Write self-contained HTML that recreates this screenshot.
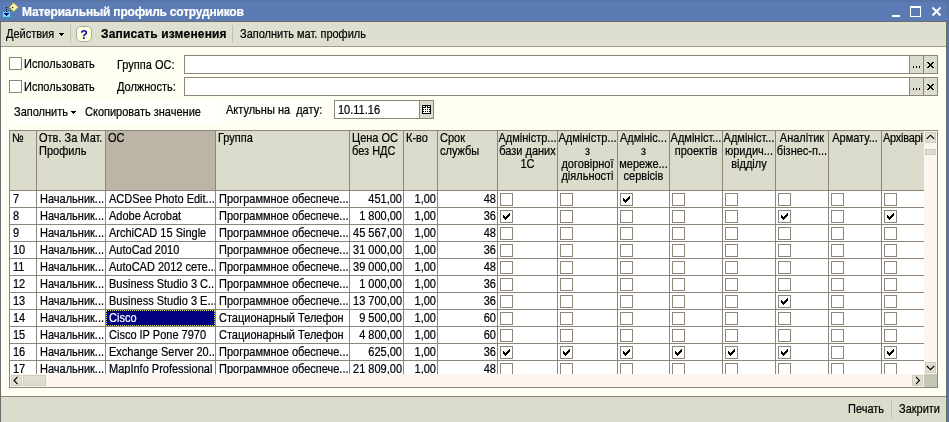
<!DOCTYPE html><html><head><meta charset="utf-8"><style>
*{box-sizing:border-box}
body{margin:0;width:949px;height:422px;overflow:hidden;position:relative;will-change:transform;background:#fffef3;font-family:"Liberation Sans",sans-serif;font-size:11px;color:#000}
.a{position:absolute;white-space:nowrap;line-height:13px;transform:scaleY(1.1);transform-origin:0 10.3px;-webkit-text-stroke:0.2px currentColor}
.box{position:absolute}
.nb{transform:none}
.h{line-height:11.82px;transform-origin:0 9.72px}
.cb{position:absolute;width:13px;height:13px;border:1px solid #8c8678;background:#fff}
</style></head><body>

<div class="box" style="left:0;top:0;width:949px;height:21px;background:#5b7bb5"></div>
<div class="box" style="left:0;top:0;width:949px;height:2px;background:#5873a8"></div>
<div class="box" style="left:947px;top:0;width:2px;height:422px;background:#5873a8"></div>
<svg class="box" style="left:0;top:0" width="20" height="21" viewBox="0 0 20 21" shape-rendering="crispEdges">
<rect x="2" y="11" width="9" height="7" fill="#3c8cb4"/>
<rect x="3" y="12" width="7" height="5" fill="#78dcdc"/>
<rect x="4" y="13" width="5" height="1" fill="#00009c"/>
<rect x="5" y="14" width="3" height="1" fill="#00009c"/>
<rect x="6" y="15" width="1" height="1" fill="#00009c"/>
<rect x="6" y="7" width="1" height="1" fill="#000"/><rect x="6" y="9" width="1" height="1" fill="#000"/><rect x="6" y="11" width="1" height="1" fill="#000"/>
<rect x="9" y="7" width="1" height="1" fill="#000"/>
</svg>
<svg class="box" style="left:0;top:0" width="20" height="21" viewBox="0 0 20 21">
<path d="M13.5 3 L18 7.5 L13.5 12 L9.5 7.5 Z" fill="#fafaa8"/>
<path d="M9.5 7.5 L13.5 3 L18 7.5" stroke="#e0d040" stroke-width="1" fill="none"/>
<path d="M18 7.5 L13.5 12 L10 8" stroke="#9a9040" stroke-width="1" fill="none"/>
<rect x="12" y="7" width="1.2" height="1.2" fill="#000"/>
</svg>
<div class="a nb" style="left:22px;top:6px;font-weight:bold;font-size:12px;color:#fff;letter-spacing:-0.2px">Материальный профиль сотрудников</div>
<div class="box" style="left:892px;top:15px;width:8px;height:2px;background:#fff"></div>
<div class="box" style="left:910px;top:6px;width:11px;height:11px;border:1px solid #fff;border-top-width:2px"></div>
<svg class="box" style="left:931px;top:6px" width="11" height="11" viewBox="0 0 11 11"><path d="M1.5 1.5 L9.5 9.5 M9.5 1.5 L1.5 9.5" stroke="#fff" stroke-width="2"/></svg>
<div class="box" style="left:0;top:21px;width:947px;height:401px;border-left:1px solid #6c6c6c;border-right:1px solid #6c6c6c;border-top:1px solid #6c6c6c"></div>
<div class="box" style="left:1px;top:22px;width:945px;height:24px;background:#dfdfd0"></div>
<div class="box" style="left:1px;top:46px;width:945px;height:1px;background:#a09c8c"></div>
<div class="a" style="left:6px;top:28px">Действия</div>
<svg class="box" style="left:59px;top:33px" width="5" height="3" shape-rendering="crispEdges"><rect x="0" y="0" width="5" height="1"/><rect x="1" y="1" width="3" height="1"/><rect x="2" y="2" width="1" height="1"/></svg>
<div class="box" style="left:70px;top:25px;width:1px;height:18px;background:#c0c0b0"></div>
<svg class="box" style="left:76px;top:26px" width="16" height="16" viewBox="0 0 16 16"><path d="M3.5 0.5 H12.5 L15.5 3.5 V12.5 L12.5 15.5 H3.5 L0.5 12.5 V3.5 Z" fill="#fdfdd8" stroke="#a8a8a8"/><text x="8" y="12.5" text-anchor="middle" font-family="Liberation Sans" font-weight="bold" font-size="12.5" fill="#0000a8">?</text></svg>
<div class="a nb" style="left:101px;top:28px;font-weight:bold;font-size:12px;letter-spacing:0.15px">Записать изменения</div>
<div class="box" style="left:232px;top:25px;width:1px;height:18px;background:#c0c0b0"></div>
<div class="a" style="left:240px;top:28px">Заполнить мат. профиль</div>
<div class="cb" style="left:9px;top:57px"></div><div class="a" style="left:24px;top:58px">Использовать</div>
<div class="cb" style="left:9px;top:80px"></div><div class="a" style="left:24px;top:81px">Использовать</div>
<div class="a" style="left:117px;top:59px">Группа ОС:</div>
<div class="a" style="left:117px;top:81px">Должность:</div>
<div class="box" style="left:184px;top:55px;width:754px;height:19px;border:1px solid #8c8678;background:#fff"></div>
<div class="box" style="left:909px;top:56px;width:15px;height:17px;background:#dcdccc;border-left:1px solid #8c8678"></div>
<div class="box" style="left:923px;top:56px;width:14px;height:17px;background:#dcdccc;border-left:1px solid #8c8678"></div>
<svg class="box" style="left:909px;top:55px" width="29" height="19" viewBox="0 0 29 19" shape-rendering="crispEdges"><rect x="4" y="11" width="1" height="2"/><rect x="7" y="11" width="1" height="2"/><rect x="10" y="11" width="1" height="2"/><rect x="18" y="7" width="1" height="1"/><rect x="19" y="7" width="1" height="1"/><rect x="23" y="7" width="1" height="1"/><rect x="24" y="7" width="1" height="1"/><rect x="19" y="8" width="1" height="1"/><rect x="20" y="8" width="1" height="1"/><rect x="22" y="8" width="1" height="1"/><rect x="23" y="8" width="1" height="1"/><rect x="20" y="9" width="1" height="1"/><rect x="21" y="9" width="1" height="1"/><rect x="22" y="9" width="1" height="1"/><rect x="20" y="10" width="1" height="1"/><rect x="21" y="10" width="1" height="1"/><rect x="22" y="10" width="1" height="1"/><rect x="19" y="11" width="1" height="1"/><rect x="20" y="11" width="1" height="1"/><rect x="22" y="11" width="1" height="1"/><rect x="23" y="11" width="1" height="1"/><rect x="18" y="12" width="1" height="1"/><rect x="19" y="12" width="1" height="1"/><rect x="23" y="12" width="1" height="1"/><rect x="24" y="12" width="1" height="1"/></svg>
<div class="box" style="left:184px;top:77px;width:754px;height:19px;border:1px solid #8c8678;background:#fff"></div>
<div class="box" style="left:909px;top:78px;width:15px;height:17px;background:#dcdccc;border-left:1px solid #8c8678"></div>
<div class="box" style="left:923px;top:78px;width:14px;height:17px;background:#dcdccc;border-left:1px solid #8c8678"></div>
<svg class="box" style="left:909px;top:77px" width="29" height="19" viewBox="0 0 29 19" shape-rendering="crispEdges"><rect x="4" y="11" width="1" height="2"/><rect x="7" y="11" width="1" height="2"/><rect x="10" y="11" width="1" height="2"/><rect x="18" y="7" width="1" height="1"/><rect x="19" y="7" width="1" height="1"/><rect x="23" y="7" width="1" height="1"/><rect x="24" y="7" width="1" height="1"/><rect x="19" y="8" width="1" height="1"/><rect x="20" y="8" width="1" height="1"/><rect x="22" y="8" width="1" height="1"/><rect x="23" y="8" width="1" height="1"/><rect x="20" y="9" width="1" height="1"/><rect x="21" y="9" width="1" height="1"/><rect x="22" y="9" width="1" height="1"/><rect x="20" y="10" width="1" height="1"/><rect x="21" y="10" width="1" height="1"/><rect x="22" y="10" width="1" height="1"/><rect x="19" y="11" width="1" height="1"/><rect x="20" y="11" width="1" height="1"/><rect x="22" y="11" width="1" height="1"/><rect x="23" y="11" width="1" height="1"/><rect x="18" y="12" width="1" height="1"/><rect x="19" y="12" width="1" height="1"/><rect x="23" y="12" width="1" height="1"/><rect x="24" y="12" width="1" height="1"/></svg>
<div class="box" style="left:9px;top:100px;width:213px;height:24px;background:#fffffb"></div>
<div class="a" style="left:14px;top:106px">Заполнить</div>
<svg class="box" style="left:71px;top:111px" width="5" height="3" shape-rendering="crispEdges"><rect x="0" y="0" width="5" height="1"/><rect x="1" y="1" width="3" height="1"/><rect x="2" y="2" width="1" height="1"/></svg>
<div class="a" style="left:85px;top:106px">Скопировать значение</div>
<div class="box" style="left:226px;top:100px;width:96px;height:19px;background:#fffffb"></div>
<div class="a" style="left:226px;top:104px">Актульны на&nbsp; дату:</div>
<div class="box" style="left:334px;top:100px;width:100px;height:19px;border:1px solid #8c8678;background:#fff"></div>
<div class="box" style="left:419px;top:101px;width:14px;height:17px;background:#dcdccc;border-left:1px solid #8c8678"></div>
<svg class="box" style="left:422px;top:105px" width="9" height="9" viewBox="0 0 9 9" shape-rendering="crispEdges"><rect x="0" y="0" width="9" height="9" fill="#fff"/><rect x="0" y="0" width="1" height="1"/><rect x="1" y="0" width="1" height="1"/><rect x="2" y="0" width="1" height="1"/><rect x="3" y="0" width="1" height="1"/><rect x="4" y="0" width="1" height="1"/><rect x="5" y="0" width="1" height="1"/><rect x="6" y="0" width="1" height="1"/><rect x="7" y="0" width="1" height="1"/><rect x="8" y="0" width="1" height="1"/><rect x="0" y="1" width="1" height="1"/><rect x="3" y="1" width="1" height="1"/><rect x="5" y="1" width="1" height="1"/><rect x="8" y="1" width="1" height="1"/><rect x="0" y="2" width="1" height="1"/><rect x="1" y="2" width="1" height="1"/><rect x="2" y="2" width="1" height="1"/><rect x="3" y="2" width="1" height="1"/><rect x="5" y="2" width="1" height="1"/><rect x="6" y="2" width="1" height="1"/><rect x="7" y="2" width="1" height="1"/><rect x="8" y="2" width="1" height="1"/><rect x="0" y="3" width="1" height="1"/><rect x="8" y="3" width="1" height="1"/><rect x="0" y="4" width="1" height="1"/><rect x="1" y="4" width="1" height="1"/><rect x="3" y="4" width="1" height="1"/><rect x="5" y="4" width="1" height="1"/><rect x="7" y="4" width="1" height="1"/><rect x="8" y="4" width="1" height="1"/><rect x="0" y="5" width="1" height="1"/><rect x="8" y="5" width="1" height="1"/><rect x="0" y="6" width="1" height="1"/><rect x="1" y="6" width="1" height="1"/><rect x="3" y="6" width="1" height="1"/><rect x="5" y="6" width="1" height="1"/><rect x="7" y="6" width="1" height="1"/><rect x="8" y="6" width="1" height="1"/><rect x="0" y="7" width="1" height="1"/><rect x="8" y="7" width="1" height="1"/><rect x="0" y="8" width="1" height="1"/><rect x="1" y="8" width="1" height="1"/><rect x="2" y="8" width="1" height="1"/><rect x="3" y="8" width="1" height="1"/><rect x="4" y="8" width="1" height="1"/><rect x="5" y="8" width="1" height="1"/><rect x="6" y="8" width="1" height="1"/><rect x="7" y="8" width="1" height="1"/><rect x="8" y="8" width="1" height="1"/></svg>
<div class="a" style="left:338px;top:104px">10.11.16</div>
<div class="box" style="left:9px;top:130px;width:929px;height:258px;border:1px solid #8c8678;background:#fff"></div>
<div class="box" style="left:10px;top:131px;width:914px;height:59px;background:#dcdccc"></div>
<div class="box" style="left:106px;top:131px;width:109px;height:59px;background:#bcb4a4"></div>
<div class="box" style="left:10px;top:190px;width:914px;height:1px;background:#8c8678"></div>
<div class="box" style="left:36px;top:131px;width:1px;height:243px;background:#8c8678"></div>
<div class="box" style="left:105px;top:131px;width:1px;height:243px;background:#8c8678"></div>
<div class="box" style="left:215px;top:131px;width:1px;height:243px;background:#8c8678"></div>
<div class="box" style="left:349px;top:131px;width:1px;height:243px;background:#8c8678"></div>
<div class="box" style="left:403px;top:131px;width:1px;height:243px;background:#8c8678"></div>
<div class="box" style="left:437px;top:131px;width:1px;height:243px;background:#8c8678"></div>
<div class="box" style="left:497px;top:131px;width:1px;height:243px;background:#8c8678"></div>
<div class="box" style="left:557px;top:131px;width:1px;height:243px;background:#8c8678"></div>
<div class="box" style="left:617px;top:131px;width:1px;height:243px;background:#8c8678"></div>
<div class="box" style="left:669px;top:131px;width:1px;height:243px;background:#8c8678"></div>
<div class="box" style="left:722px;top:131px;width:1px;height:243px;background:#8c8678"></div>
<div class="box" style="left:775px;top:131px;width:1px;height:243px;background:#8c8678"></div>
<div class="box" style="left:828px;top:131px;width:1px;height:243px;background:#8c8678"></div>
<div class="box" style="left:881px;top:131px;width:1px;height:243px;background:#8c8678"></div>
<div class="box" style="left:10px;top:207px;width:914px;height:1px;background:#8c8678"></div>
<div class="box" style="left:10px;top:224px;width:914px;height:1px;background:#8c8678"></div>
<div class="box" style="left:10px;top:241px;width:914px;height:1px;background:#8c8678"></div>
<div class="box" style="left:10px;top:258px;width:914px;height:1px;background:#8c8678"></div>
<div class="box" style="left:10px;top:275px;width:914px;height:1px;background:#8c8678"></div>
<div class="box" style="left:10px;top:292px;width:914px;height:1px;background:#8c8678"></div>
<div class="box" style="left:10px;top:309px;width:914px;height:1px;background:#8c8678"></div>
<div class="box" style="left:10px;top:326px;width:914px;height:1px;background:#8c8678"></div>
<div class="box" style="left:10px;top:343px;width:914px;height:1px;background:#8c8678"></div>
<div class="box" style="left:10px;top:360px;width:914px;height:1px;background:#8c8678"></div>
<div class="a h" style="left:12px;top:132.6px;width:24px;overflow:hidden">№</div>
<div class="a h" style="left:39px;top:132.6px;width:66px;overflow:hidden">Отв. За Мат.<br>Профиль</div>
<div class="a h" style="left:108px;top:132.6px;width:107px;overflow:hidden">ОС</div>
<div class="a h" style="left:218px;top:132.6px;width:131px;overflow:hidden">Группа</div>
<div class="a h" style="left:352px;top:132.6px;width:51px;overflow:hidden">Цена ОС<br>без НДС</div>
<div class="a h" style="left:406px;top:132.6px;width:31px;overflow:hidden">К-во</div>
<div class="a h" style="left:440px;top:132.6px;width:57px;overflow:hidden">Срок<br>службы</div>
<div class="a h" style="left:498px;top:132.6px;width:59px;text-align:center;overflow:hidden">Адміністр...<br>бази даних<br>1С</div>
<div class="a h" style="left:558px;top:132.6px;width:59px;text-align:center;overflow:hidden">Адміністр...<br>з<br>договірної<br>діяльності</div>
<div class="a h" style="left:618px;top:132.6px;width:51px;text-align:center;overflow:hidden">Адмініс...<br>з<br>мереже...<br>сервісів</div>
<div class="a h" style="left:670px;top:132.6px;width:52px;text-align:center;overflow:hidden">Адмініст...<br>проектів</div>
<div class="a h" style="left:723px;top:132.6px;width:52px;text-align:center;overflow:hidden">Адмініст...<br>юридич...<br>відділу</div>
<div class="a h" style="left:776px;top:132.6px;width:52px;text-align:center;overflow:hidden">Аналітик<br>бізнес-п...</div>
<div class="a h" style="left:829px;top:132.6px;width:52px;text-align:center;overflow:hidden">Армату...</div>
<div class="a h" style="left:883px;top:132.6px;width:41px;overflow:hidden;letter-spacing:-0.25px">Архіварі</div>
<div class="a" style="left:10px;top:193px;width:26px;padding-left:3px;overflow:hidden">7</div>
<div class="a" style="left:37px;top:193px;width:68px;padding-left:3px;overflow:hidden">Начальник...</div>
<div class="a" style="left:106px;top:193px;width:109px;padding-left:3px;overflow:hidden">ACDSee Photo Edit...</div>
<div class="a" style="left:216px;top:193px;width:133px;padding-left:3px;overflow:hidden">Программное обеспече...</div>
<div class="a" style="left:350px;top:193px;width:53px;text-align:right;padding-right:1px;overflow:hidden">451,00</div>
<div class="a" style="left:404px;top:193px;width:33px;text-align:right;padding-right:1px;overflow:hidden">1,00</div>
<div class="a" style="left:438px;top:193px;width:59px;text-align:right;padding-right:1px;overflow:hidden">48</div>
<div class="cb" style="left:500px;top:193px"></div>
<div class="cb" style="left:560px;top:193px"></div>
<div class="cb" style="left:620px;top:193px"><svg width="7" height="7" viewBox="0 0 7 7" shape-rendering="crispEdges" style="position:absolute;left:2px;top:2px"><rect x="6" y="0" width="1" height="1"/><rect x="5" y="1" width="1" height="1"/><rect x="6" y="1" width="1" height="1"/><rect x="0" y="2" width="1" height="1"/><rect x="4" y="2" width="1" height="1"/><rect x="5" y="2" width="1" height="1"/><rect x="6" y="2" width="1" height="1"/><rect x="0" y="3" width="1" height="1"/><rect x="1" y="3" width="1" height="1"/><rect x="3" y="3" width="1" height="1"/><rect x="4" y="3" width="1" height="1"/><rect x="5" y="3" width="1" height="1"/><rect x="0" y="4" width="1" height="1"/><rect x="1" y="4" width="1" height="1"/><rect x="2" y="4" width="1" height="1"/><rect x="3" y="4" width="1" height="1"/><rect x="4" y="4" width="1" height="1"/><rect x="1" y="5" width="1" height="1"/><rect x="2" y="5" width="1" height="1"/><rect x="3" y="5" width="1" height="1"/><rect x="2" y="6" width="1" height="1"/></svg></div>
<div class="cb" style="left:672px;top:193px"></div>
<div class="cb" style="left:725px;top:193px"></div>
<div class="cb" style="left:778px;top:193px"></div>
<div class="cb" style="left:831px;top:193px"></div>
<div class="cb" style="left:884px;top:193px"></div>
<div class="a" style="left:10px;top:210px;width:26px;padding-left:3px;overflow:hidden">8</div>
<div class="a" style="left:37px;top:210px;width:68px;padding-left:3px;overflow:hidden">Начальник...</div>
<div class="a" style="left:106px;top:210px;width:109px;padding-left:3px;overflow:hidden">Adobe Acrobat</div>
<div class="a" style="left:216px;top:210px;width:133px;padding-left:3px;overflow:hidden">Программное обеспече...</div>
<div class="a" style="left:350px;top:210px;width:53px;text-align:right;padding-right:1px;overflow:hidden">1 800,00</div>
<div class="a" style="left:404px;top:210px;width:33px;text-align:right;padding-right:1px;overflow:hidden">1,00</div>
<div class="a" style="left:438px;top:210px;width:59px;text-align:right;padding-right:1px;overflow:hidden">36</div>
<div class="cb" style="left:500px;top:210px"><svg width="7" height="7" viewBox="0 0 7 7" shape-rendering="crispEdges" style="position:absolute;left:2px;top:2px"><rect x="6" y="0" width="1" height="1"/><rect x="5" y="1" width="1" height="1"/><rect x="6" y="1" width="1" height="1"/><rect x="0" y="2" width="1" height="1"/><rect x="4" y="2" width="1" height="1"/><rect x="5" y="2" width="1" height="1"/><rect x="6" y="2" width="1" height="1"/><rect x="0" y="3" width="1" height="1"/><rect x="1" y="3" width="1" height="1"/><rect x="3" y="3" width="1" height="1"/><rect x="4" y="3" width="1" height="1"/><rect x="5" y="3" width="1" height="1"/><rect x="0" y="4" width="1" height="1"/><rect x="1" y="4" width="1" height="1"/><rect x="2" y="4" width="1" height="1"/><rect x="3" y="4" width="1" height="1"/><rect x="4" y="4" width="1" height="1"/><rect x="1" y="5" width="1" height="1"/><rect x="2" y="5" width="1" height="1"/><rect x="3" y="5" width="1" height="1"/><rect x="2" y="6" width="1" height="1"/></svg></div>
<div class="cb" style="left:560px;top:210px"></div>
<div class="cb" style="left:620px;top:210px"></div>
<div class="cb" style="left:672px;top:210px"></div>
<div class="cb" style="left:725px;top:210px"></div>
<div class="cb" style="left:778px;top:210px"><svg width="7" height="7" viewBox="0 0 7 7" shape-rendering="crispEdges" style="position:absolute;left:2px;top:2px"><rect x="6" y="0" width="1" height="1"/><rect x="5" y="1" width="1" height="1"/><rect x="6" y="1" width="1" height="1"/><rect x="0" y="2" width="1" height="1"/><rect x="4" y="2" width="1" height="1"/><rect x="5" y="2" width="1" height="1"/><rect x="6" y="2" width="1" height="1"/><rect x="0" y="3" width="1" height="1"/><rect x="1" y="3" width="1" height="1"/><rect x="3" y="3" width="1" height="1"/><rect x="4" y="3" width="1" height="1"/><rect x="5" y="3" width="1" height="1"/><rect x="0" y="4" width="1" height="1"/><rect x="1" y="4" width="1" height="1"/><rect x="2" y="4" width="1" height="1"/><rect x="3" y="4" width="1" height="1"/><rect x="4" y="4" width="1" height="1"/><rect x="1" y="5" width="1" height="1"/><rect x="2" y="5" width="1" height="1"/><rect x="3" y="5" width="1" height="1"/><rect x="2" y="6" width="1" height="1"/></svg></div>
<div class="cb" style="left:831px;top:210px"></div>
<div class="cb" style="left:884px;top:210px"><svg width="7" height="7" viewBox="0 0 7 7" shape-rendering="crispEdges" style="position:absolute;left:2px;top:2px"><rect x="6" y="0" width="1" height="1"/><rect x="5" y="1" width="1" height="1"/><rect x="6" y="1" width="1" height="1"/><rect x="0" y="2" width="1" height="1"/><rect x="4" y="2" width="1" height="1"/><rect x="5" y="2" width="1" height="1"/><rect x="6" y="2" width="1" height="1"/><rect x="0" y="3" width="1" height="1"/><rect x="1" y="3" width="1" height="1"/><rect x="3" y="3" width="1" height="1"/><rect x="4" y="3" width="1" height="1"/><rect x="5" y="3" width="1" height="1"/><rect x="0" y="4" width="1" height="1"/><rect x="1" y="4" width="1" height="1"/><rect x="2" y="4" width="1" height="1"/><rect x="3" y="4" width="1" height="1"/><rect x="4" y="4" width="1" height="1"/><rect x="1" y="5" width="1" height="1"/><rect x="2" y="5" width="1" height="1"/><rect x="3" y="5" width="1" height="1"/><rect x="2" y="6" width="1" height="1"/></svg></div>
<div class="a" style="left:10px;top:227px;width:26px;padding-left:3px;overflow:hidden">9</div>
<div class="a" style="left:37px;top:227px;width:68px;padding-left:3px;overflow:hidden">Начальник...</div>
<div class="a" style="left:106px;top:227px;width:109px;padding-left:3px;overflow:hidden">ArchiCAD 15 Single</div>
<div class="a" style="left:216px;top:227px;width:133px;padding-left:3px;overflow:hidden">Программное обеспече...</div>
<div class="a" style="left:350px;top:227px;width:53px;text-align:right;padding-right:1px;overflow:hidden">45 567,00</div>
<div class="a" style="left:404px;top:227px;width:33px;text-align:right;padding-right:1px;overflow:hidden">1,00</div>
<div class="a" style="left:438px;top:227px;width:59px;text-align:right;padding-right:1px;overflow:hidden">48</div>
<div class="cb" style="left:500px;top:227px"></div>
<div class="cb" style="left:560px;top:227px"></div>
<div class="cb" style="left:620px;top:227px"></div>
<div class="cb" style="left:672px;top:227px"></div>
<div class="cb" style="left:725px;top:227px"></div>
<div class="cb" style="left:778px;top:227px"></div>
<div class="cb" style="left:831px;top:227px"></div>
<div class="cb" style="left:884px;top:227px"></div>
<div class="a" style="left:10px;top:244px;width:26px;padding-left:3px;overflow:hidden">10</div>
<div class="a" style="left:37px;top:244px;width:68px;padding-left:3px;overflow:hidden">Начальник...</div>
<div class="a" style="left:106px;top:244px;width:109px;padding-left:3px;overflow:hidden">AutoCad 2010</div>
<div class="a" style="left:216px;top:244px;width:133px;padding-left:3px;overflow:hidden">Программное обеспече...</div>
<div class="a" style="left:350px;top:244px;width:53px;text-align:right;padding-right:1px;overflow:hidden">31 000,00</div>
<div class="a" style="left:404px;top:244px;width:33px;text-align:right;padding-right:1px;overflow:hidden">1,00</div>
<div class="a" style="left:438px;top:244px;width:59px;text-align:right;padding-right:1px;overflow:hidden">36</div>
<div class="cb" style="left:500px;top:244px"></div>
<div class="cb" style="left:560px;top:244px"></div>
<div class="cb" style="left:620px;top:244px"></div>
<div class="cb" style="left:672px;top:244px"></div>
<div class="cb" style="left:725px;top:244px"></div>
<div class="cb" style="left:778px;top:244px"></div>
<div class="cb" style="left:831px;top:244px"></div>
<div class="cb" style="left:884px;top:244px"></div>
<div class="a" style="left:10px;top:261px;width:26px;padding-left:3px;overflow:hidden">11</div>
<div class="a" style="left:37px;top:261px;width:68px;padding-left:3px;overflow:hidden">Начальник...</div>
<div class="a" style="left:106px;top:261px;width:109px;padding-left:3px;overflow:hidden">AutoCAD 2012 сете...</div>
<div class="a" style="left:216px;top:261px;width:133px;padding-left:3px;overflow:hidden">Программное обеспече...</div>
<div class="a" style="left:350px;top:261px;width:53px;text-align:right;padding-right:1px;overflow:hidden">39 000,00</div>
<div class="a" style="left:404px;top:261px;width:33px;text-align:right;padding-right:1px;overflow:hidden">1,00</div>
<div class="a" style="left:438px;top:261px;width:59px;text-align:right;padding-right:1px;overflow:hidden">48</div>
<div class="cb" style="left:500px;top:261px"></div>
<div class="cb" style="left:560px;top:261px"></div>
<div class="cb" style="left:620px;top:261px"></div>
<div class="cb" style="left:672px;top:261px"></div>
<div class="cb" style="left:725px;top:261px"></div>
<div class="cb" style="left:778px;top:261px"></div>
<div class="cb" style="left:831px;top:261px"></div>
<div class="cb" style="left:884px;top:261px"></div>
<div class="a" style="left:10px;top:278px;width:26px;padding-left:3px;overflow:hidden">12</div>
<div class="a" style="left:37px;top:278px;width:68px;padding-left:3px;overflow:hidden">Начальник...</div>
<div class="a" style="left:106px;top:278px;width:109px;padding-left:3px;overflow:hidden">Business Studio 3 C...</div>
<div class="a" style="left:216px;top:278px;width:133px;padding-left:3px;overflow:hidden">Программное обеспече...</div>
<div class="a" style="left:350px;top:278px;width:53px;text-align:right;padding-right:1px;overflow:hidden">1 000,00</div>
<div class="a" style="left:404px;top:278px;width:33px;text-align:right;padding-right:1px;overflow:hidden">1,00</div>
<div class="a" style="left:438px;top:278px;width:59px;text-align:right;padding-right:1px;overflow:hidden">36</div>
<div class="cb" style="left:500px;top:278px"></div>
<div class="cb" style="left:560px;top:278px"></div>
<div class="cb" style="left:620px;top:278px"></div>
<div class="cb" style="left:672px;top:278px"></div>
<div class="cb" style="left:725px;top:278px"></div>
<div class="cb" style="left:778px;top:278px"></div>
<div class="cb" style="left:831px;top:278px"></div>
<div class="cb" style="left:884px;top:278px"></div>
<div class="a" style="left:10px;top:295px;width:26px;padding-left:3px;overflow:hidden">13</div>
<div class="a" style="left:37px;top:295px;width:68px;padding-left:3px;overflow:hidden">Начальник...</div>
<div class="a" style="left:106px;top:295px;width:109px;padding-left:3px;overflow:hidden">Business Studio 3 E...</div>
<div class="a" style="left:216px;top:295px;width:133px;padding-left:3px;overflow:hidden">Программное обеспече...</div>
<div class="a" style="left:350px;top:295px;width:53px;text-align:right;padding-right:1px;overflow:hidden">13 700,00</div>
<div class="a" style="left:404px;top:295px;width:33px;text-align:right;padding-right:1px;overflow:hidden">1,00</div>
<div class="a" style="left:438px;top:295px;width:59px;text-align:right;padding-right:1px;overflow:hidden">36</div>
<div class="cb" style="left:500px;top:295px"></div>
<div class="cb" style="left:560px;top:295px"></div>
<div class="cb" style="left:620px;top:295px"></div>
<div class="cb" style="left:672px;top:295px"></div>
<div class="cb" style="left:725px;top:295px"></div>
<div class="cb" style="left:778px;top:295px"><svg width="7" height="7" viewBox="0 0 7 7" shape-rendering="crispEdges" style="position:absolute;left:2px;top:2px"><rect x="6" y="0" width="1" height="1"/><rect x="5" y="1" width="1" height="1"/><rect x="6" y="1" width="1" height="1"/><rect x="0" y="2" width="1" height="1"/><rect x="4" y="2" width="1" height="1"/><rect x="5" y="2" width="1" height="1"/><rect x="6" y="2" width="1" height="1"/><rect x="0" y="3" width="1" height="1"/><rect x="1" y="3" width="1" height="1"/><rect x="3" y="3" width="1" height="1"/><rect x="4" y="3" width="1" height="1"/><rect x="5" y="3" width="1" height="1"/><rect x="0" y="4" width="1" height="1"/><rect x="1" y="4" width="1" height="1"/><rect x="2" y="4" width="1" height="1"/><rect x="3" y="4" width="1" height="1"/><rect x="4" y="4" width="1" height="1"/><rect x="1" y="5" width="1" height="1"/><rect x="2" y="5" width="1" height="1"/><rect x="3" y="5" width="1" height="1"/><rect x="2" y="6" width="1" height="1"/></svg></div>
<div class="cb" style="left:831px;top:295px"></div>
<div class="cb" style="left:884px;top:295px"></div>
<div class="a" style="left:10px;top:312px;width:26px;padding-left:3px;overflow:hidden">14</div>
<div class="a" style="left:37px;top:312px;width:68px;padding-left:3px;overflow:hidden">Начальник...</div>
<div class="box" style="left:106px;top:310px;width:109px;height:16px;background:#000080;border:1px dotted #e0e060"></div>
<div class="a" style="left:106px;top:312px;width:109px;padding-left:3px;color:#fff;overflow:hidden">Cisco</div>
<div class="a" style="left:216px;top:312px;width:133px;padding-left:3px;overflow:hidden">Стационарный Телефон</div>
<div class="a" style="left:350px;top:312px;width:53px;text-align:right;padding-right:1px;overflow:hidden">9 500,00</div>
<div class="a" style="left:404px;top:312px;width:33px;text-align:right;padding-right:1px;overflow:hidden">1,00</div>
<div class="a" style="left:438px;top:312px;width:59px;text-align:right;padding-right:1px;overflow:hidden">60</div>
<div class="cb" style="left:500px;top:312px"></div>
<div class="cb" style="left:560px;top:312px"></div>
<div class="cb" style="left:620px;top:312px"></div>
<div class="cb" style="left:672px;top:312px"></div>
<div class="cb" style="left:725px;top:312px"></div>
<div class="cb" style="left:778px;top:312px"></div>
<div class="cb" style="left:831px;top:312px"></div>
<div class="cb" style="left:884px;top:312px"></div>
<div class="a" style="left:10px;top:329px;width:26px;padding-left:3px;overflow:hidden">15</div>
<div class="a" style="left:37px;top:329px;width:68px;padding-left:3px;overflow:hidden">Начальник...</div>
<div class="a" style="left:106px;top:329px;width:109px;padding-left:3px;overflow:hidden">Cisco IP Pone 7970</div>
<div class="a" style="left:216px;top:329px;width:133px;padding-left:3px;overflow:hidden">Стационарный Телефон</div>
<div class="a" style="left:350px;top:329px;width:53px;text-align:right;padding-right:1px;overflow:hidden">4 800,00</div>
<div class="a" style="left:404px;top:329px;width:33px;text-align:right;padding-right:1px;overflow:hidden">1,00</div>
<div class="a" style="left:438px;top:329px;width:59px;text-align:right;padding-right:1px;overflow:hidden">60</div>
<div class="cb" style="left:500px;top:329px"></div>
<div class="cb" style="left:560px;top:329px"></div>
<div class="cb" style="left:620px;top:329px"></div>
<div class="cb" style="left:672px;top:329px"></div>
<div class="cb" style="left:725px;top:329px"></div>
<div class="cb" style="left:778px;top:329px"></div>
<div class="cb" style="left:831px;top:329px"></div>
<div class="cb" style="left:884px;top:329px"></div>
<div class="a" style="left:10px;top:346px;width:26px;padding-left:3px;overflow:hidden">16</div>
<div class="a" style="left:37px;top:346px;width:68px;padding-left:3px;overflow:hidden">Начальник...</div>
<div class="a" style="left:106px;top:346px;width:109px;padding-left:3px;overflow:hidden">Exchange Server 20...</div>
<div class="a" style="left:216px;top:346px;width:133px;padding-left:3px;overflow:hidden">Программное обеспече...</div>
<div class="a" style="left:350px;top:346px;width:53px;text-align:right;padding-right:1px;overflow:hidden">625,00</div>
<div class="a" style="left:404px;top:346px;width:33px;text-align:right;padding-right:1px;overflow:hidden">1,00</div>
<div class="a" style="left:438px;top:346px;width:59px;text-align:right;padding-right:1px;overflow:hidden">36</div>
<div class="cb" style="left:500px;top:346px"><svg width="7" height="7" viewBox="0 0 7 7" shape-rendering="crispEdges" style="position:absolute;left:2px;top:2px"><rect x="6" y="0" width="1" height="1"/><rect x="5" y="1" width="1" height="1"/><rect x="6" y="1" width="1" height="1"/><rect x="0" y="2" width="1" height="1"/><rect x="4" y="2" width="1" height="1"/><rect x="5" y="2" width="1" height="1"/><rect x="6" y="2" width="1" height="1"/><rect x="0" y="3" width="1" height="1"/><rect x="1" y="3" width="1" height="1"/><rect x="3" y="3" width="1" height="1"/><rect x="4" y="3" width="1" height="1"/><rect x="5" y="3" width="1" height="1"/><rect x="0" y="4" width="1" height="1"/><rect x="1" y="4" width="1" height="1"/><rect x="2" y="4" width="1" height="1"/><rect x="3" y="4" width="1" height="1"/><rect x="4" y="4" width="1" height="1"/><rect x="1" y="5" width="1" height="1"/><rect x="2" y="5" width="1" height="1"/><rect x="3" y="5" width="1" height="1"/><rect x="2" y="6" width="1" height="1"/></svg></div>
<div class="cb" style="left:560px;top:346px"><svg width="7" height="7" viewBox="0 0 7 7" shape-rendering="crispEdges" style="position:absolute;left:2px;top:2px"><rect x="6" y="0" width="1" height="1"/><rect x="5" y="1" width="1" height="1"/><rect x="6" y="1" width="1" height="1"/><rect x="0" y="2" width="1" height="1"/><rect x="4" y="2" width="1" height="1"/><rect x="5" y="2" width="1" height="1"/><rect x="6" y="2" width="1" height="1"/><rect x="0" y="3" width="1" height="1"/><rect x="1" y="3" width="1" height="1"/><rect x="3" y="3" width="1" height="1"/><rect x="4" y="3" width="1" height="1"/><rect x="5" y="3" width="1" height="1"/><rect x="0" y="4" width="1" height="1"/><rect x="1" y="4" width="1" height="1"/><rect x="2" y="4" width="1" height="1"/><rect x="3" y="4" width="1" height="1"/><rect x="4" y="4" width="1" height="1"/><rect x="1" y="5" width="1" height="1"/><rect x="2" y="5" width="1" height="1"/><rect x="3" y="5" width="1" height="1"/><rect x="2" y="6" width="1" height="1"/></svg></div>
<div class="cb" style="left:620px;top:346px"><svg width="7" height="7" viewBox="0 0 7 7" shape-rendering="crispEdges" style="position:absolute;left:2px;top:2px"><rect x="6" y="0" width="1" height="1"/><rect x="5" y="1" width="1" height="1"/><rect x="6" y="1" width="1" height="1"/><rect x="0" y="2" width="1" height="1"/><rect x="4" y="2" width="1" height="1"/><rect x="5" y="2" width="1" height="1"/><rect x="6" y="2" width="1" height="1"/><rect x="0" y="3" width="1" height="1"/><rect x="1" y="3" width="1" height="1"/><rect x="3" y="3" width="1" height="1"/><rect x="4" y="3" width="1" height="1"/><rect x="5" y="3" width="1" height="1"/><rect x="0" y="4" width="1" height="1"/><rect x="1" y="4" width="1" height="1"/><rect x="2" y="4" width="1" height="1"/><rect x="3" y="4" width="1" height="1"/><rect x="4" y="4" width="1" height="1"/><rect x="1" y="5" width="1" height="1"/><rect x="2" y="5" width="1" height="1"/><rect x="3" y="5" width="1" height="1"/><rect x="2" y="6" width="1" height="1"/></svg></div>
<div class="cb" style="left:672px;top:346px"><svg width="7" height="7" viewBox="0 0 7 7" shape-rendering="crispEdges" style="position:absolute;left:2px;top:2px"><rect x="6" y="0" width="1" height="1"/><rect x="5" y="1" width="1" height="1"/><rect x="6" y="1" width="1" height="1"/><rect x="0" y="2" width="1" height="1"/><rect x="4" y="2" width="1" height="1"/><rect x="5" y="2" width="1" height="1"/><rect x="6" y="2" width="1" height="1"/><rect x="0" y="3" width="1" height="1"/><rect x="1" y="3" width="1" height="1"/><rect x="3" y="3" width="1" height="1"/><rect x="4" y="3" width="1" height="1"/><rect x="5" y="3" width="1" height="1"/><rect x="0" y="4" width="1" height="1"/><rect x="1" y="4" width="1" height="1"/><rect x="2" y="4" width="1" height="1"/><rect x="3" y="4" width="1" height="1"/><rect x="4" y="4" width="1" height="1"/><rect x="1" y="5" width="1" height="1"/><rect x="2" y="5" width="1" height="1"/><rect x="3" y="5" width="1" height="1"/><rect x="2" y="6" width="1" height="1"/></svg></div>
<div class="cb" style="left:725px;top:346px"><svg width="7" height="7" viewBox="0 0 7 7" shape-rendering="crispEdges" style="position:absolute;left:2px;top:2px"><rect x="6" y="0" width="1" height="1"/><rect x="5" y="1" width="1" height="1"/><rect x="6" y="1" width="1" height="1"/><rect x="0" y="2" width="1" height="1"/><rect x="4" y="2" width="1" height="1"/><rect x="5" y="2" width="1" height="1"/><rect x="6" y="2" width="1" height="1"/><rect x="0" y="3" width="1" height="1"/><rect x="1" y="3" width="1" height="1"/><rect x="3" y="3" width="1" height="1"/><rect x="4" y="3" width="1" height="1"/><rect x="5" y="3" width="1" height="1"/><rect x="0" y="4" width="1" height="1"/><rect x="1" y="4" width="1" height="1"/><rect x="2" y="4" width="1" height="1"/><rect x="3" y="4" width="1" height="1"/><rect x="4" y="4" width="1" height="1"/><rect x="1" y="5" width="1" height="1"/><rect x="2" y="5" width="1" height="1"/><rect x="3" y="5" width="1" height="1"/><rect x="2" y="6" width="1" height="1"/></svg></div>
<div class="cb" style="left:778px;top:346px"><svg width="7" height="7" viewBox="0 0 7 7" shape-rendering="crispEdges" style="position:absolute;left:2px;top:2px"><rect x="6" y="0" width="1" height="1"/><rect x="5" y="1" width="1" height="1"/><rect x="6" y="1" width="1" height="1"/><rect x="0" y="2" width="1" height="1"/><rect x="4" y="2" width="1" height="1"/><rect x="5" y="2" width="1" height="1"/><rect x="6" y="2" width="1" height="1"/><rect x="0" y="3" width="1" height="1"/><rect x="1" y="3" width="1" height="1"/><rect x="3" y="3" width="1" height="1"/><rect x="4" y="3" width="1" height="1"/><rect x="5" y="3" width="1" height="1"/><rect x="0" y="4" width="1" height="1"/><rect x="1" y="4" width="1" height="1"/><rect x="2" y="4" width="1" height="1"/><rect x="3" y="4" width="1" height="1"/><rect x="4" y="4" width="1" height="1"/><rect x="1" y="5" width="1" height="1"/><rect x="2" y="5" width="1" height="1"/><rect x="3" y="5" width="1" height="1"/><rect x="2" y="6" width="1" height="1"/></svg></div>
<div class="cb" style="left:831px;top:346px"></div>
<div class="cb" style="left:884px;top:346px"><svg width="7" height="7" viewBox="0 0 7 7" shape-rendering="crispEdges" style="position:absolute;left:2px;top:2px"><rect x="6" y="0" width="1" height="1"/><rect x="5" y="1" width="1" height="1"/><rect x="6" y="1" width="1" height="1"/><rect x="0" y="2" width="1" height="1"/><rect x="4" y="2" width="1" height="1"/><rect x="5" y="2" width="1" height="1"/><rect x="6" y="2" width="1" height="1"/><rect x="0" y="3" width="1" height="1"/><rect x="1" y="3" width="1" height="1"/><rect x="3" y="3" width="1" height="1"/><rect x="4" y="3" width="1" height="1"/><rect x="5" y="3" width="1" height="1"/><rect x="0" y="4" width="1" height="1"/><rect x="1" y="4" width="1" height="1"/><rect x="2" y="4" width="1" height="1"/><rect x="3" y="4" width="1" height="1"/><rect x="4" y="4" width="1" height="1"/><rect x="1" y="5" width="1" height="1"/><rect x="2" y="5" width="1" height="1"/><rect x="3" y="5" width="1" height="1"/><rect x="2" y="6" width="1" height="1"/></svg></div>
<div class="a" style="left:10px;top:363px;width:26px;padding-left:3px;overflow:hidden">17</div>
<div class="a" style="left:37px;top:363px;width:68px;padding-left:3px;overflow:hidden">Начальник...</div>
<div class="a" style="left:106px;top:363px;width:109px;padding-left:3px;overflow:hidden">MapInfo Professional</div>
<div class="a" style="left:216px;top:363px;width:133px;padding-left:3px;overflow:hidden">Программное обеспече...</div>
<div class="a" style="left:350px;top:363px;width:53px;text-align:right;padding-right:1px;overflow:hidden">21 809,00</div>
<div class="a" style="left:404px;top:363px;width:33px;text-align:right;padding-right:1px;overflow:hidden">1,00</div>
<div class="a" style="left:438px;top:363px;width:59px;text-align:right;padding-right:1px;overflow:hidden">48</div>
<div class="cb" style="left:500px;top:363px"></div>
<div class="cb" style="left:560px;top:363px"></div>
<div class="cb" style="left:620px;top:363px"></div>
<div class="cb" style="left:672px;top:363px"></div>
<div class="cb" style="left:725px;top:363px"></div>
<div class="cb" style="left:778px;top:363px"></div>
<div class="cb" style="left:831px;top:363px"></div>
<div class="cb" style="left:884px;top:363px"></div>
<div class="box" style="left:10px;top:374px;width:914px;height:13px;background:#fdf5f0"></div>
<div class="box" style="left:11px;top:375px;width:11px;height:11px;background:#e2ded2;border:1px solid #d2cdc0;"></div>
<svg class="box" style="left:11px;top:375px" width="11" height="11" viewBox="0 0 11 11"><path d="M6.5 1.8 L3 5.5 L6.5 9.2" stroke="#000" stroke-width="1.15" fill="none"/></svg>
<div class="box" style="left:23px;top:375px;width:23px;height:11px;background:linear-gradient(#dfe0d0,#ddd9cd);border:1px solid #d2cdc0"></div>
<div class="box" style="left:912px;top:375px;width:11px;height:11px;background:#e2ded2;border:1px solid #d2cdc0;"></div>
<svg class="box" style="left:912px;top:375px" width="11" height="11" viewBox="0 0 11 11"><path d="M4 1.8 L7.5 5.5 L4 9.2" stroke="#000" stroke-width="1.15" fill="none"/></svg>
<div class="box" style="left:924px;top:131px;width:13px;height:243px;background:#fdf5f0"></div>
<div class="box" style="left:925px;top:132px;width:11px;height:11px;background:#e2ded2;border:1px solid #d2cdc0;"></div>
<svg class="box" style="left:925px;top:132px" width="11" height="11" viewBox="0 0 11 11"><path d="M1.8 6.8 L5.5 3.2 L9.2 6.8" stroke="#000" stroke-width="1.15" fill="none"/></svg>
<div class="box" style="left:925px;top:149px;width:11px;height:6px;background:#e0ddd0;border:1px solid #d2cdc0"></div>
<div class="box" style="left:925px;top:362px;width:11px;height:11px;background:#e2ded2;border:1px solid #d2cdc0;"></div>
<svg class="box" style="left:925px;top:362px" width="11" height="11" viewBox="0 0 11 11"><path d="M1.8 4 L5.5 7.6 L9.2 4" stroke="#000" stroke-width="1.15" fill="none"/></svg>
<div class="box" style="left:924px;top:374px;width:13px;height:13px;background:#c4c6b4"></div>
<div class="box" style="left:1px;top:396px;width:945px;height:1px;background:#8c8678"></div>
<div class="box" style="left:1px;top:397px;width:945px;height:25px;background:#dcdccc"></div>
<div class="a" style="left:848px;top:403px">Печать</div>
<div class="box" style="left:891px;top:400px;width:1px;height:18px;background:#c0c0b0"></div>
<div class="a" style="left:899px;top:403px">Закрити</div>
</body></html>
